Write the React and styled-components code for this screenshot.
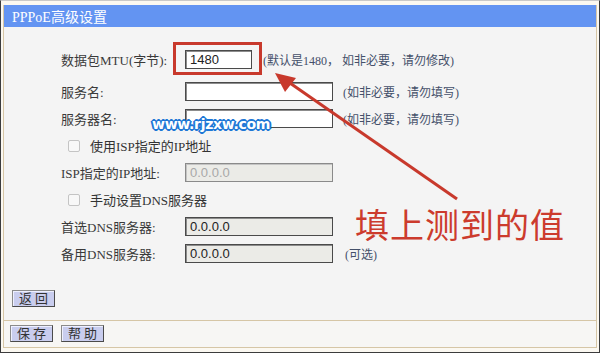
import React from 'react';
import styled, { createGlobalStyle } from 'styled-components';

const GlobalStyle = createGlobalStyle`
  html, body {
    margin: 0;
    padding: 0;
    background: #ffffff;
  }
  * {
    box-sizing: border-box;
  }
`;

const FONT = `"Liberation Serif", "Noto Sans CJK SC", serif`;

const Frame = styled.div`
  position: relative;
  width: 600px;
  height: 353px;
  padding: 4px 2px 4px 2px;
  background: #fbf8f1;
  border: 1px solid #3c3c3c;
  border-top-color: #c9c9c9;
  font-family: ${FONT};
  color: #333;
  overflow: hidden;
`;

const Window = styled.div`
  display: flex;
  flex-direction: column;
  height: 100%;
  border: 1px solid #d6c6a6;
  border-top: none;
`;

const TitleBar = styled.div`
  height: 22px;
  display: flex;
  align-items: center;
  padding-left: 8px;
  background: #6394f2;
  color: #fff;
  font-size: 14px;
`;

const Panel = styled.div`
  height: 294px;
  background: #f4f4f4;
  border-bottom: 1px solid #d6c6a6;
`;

const Form = styled.div`
  display: flex;
  flex-direction: column;
  padding: 14px 0 0 57px;
`;

const Row = styled.div`
  display: flex;
  align-items: center;
  height: ${(p) => (p.$tall ? 37 : 27)}px;
  font-size: 13px;
`;

const Label = styled.span`
  width: 124px;
  flex: none;
  color: #3a3a3a;
`;

const Field = styled.span`
  position: relative;
  display: inline-flex;
`;

const Input = styled.input`
  width: ${(p) => p.$w}px;
  height: ${(p) => p.$h || 19}px;
  padding: 0 4px;
  font-family: "Liberation Sans", "DejaVu Sans", sans-serif;
  font-size: 13px;
  color: ${(p) => (p.$muted ? '#a8a8a8' : '#222')};
  background: ${(p) => (p.$gray ? '#ebebe7' : '#ffffff')};
  border: 1px solid ${(p) => (p.$muted ? '#8a8a8a' : '#4a4a4a')};
  box-shadow: inset 1px 1px 0 ${(p) => (p.$muted ? '#c4c4c4' : '#8c8c8c')};
  outline: none;
`;

const Highlight = styled.span`
  position: absolute;
  top: -8px;
  right: -10px;
  bottom: -6px;
  left: -12px;
  border: 3px solid #c8392c;
  pointer-events: none;
`;

const Hint = styled.span`
  margin-left: ${(p) => p.$gap || 10}px;
  font-size: 12px;
  color: #44506a;
  white-space: nowrap;
`;

const CheckRow = styled(Row)`
  padding-left: 7px;
`;

const Box = styled.span`
  width: 12px;
  height: 12px;
  margin-right: 10px;
  border: 1px solid #c4c4c4;
  border-radius: 2px;
  background: #f8f8f8;
`;

const BackBar = styled.div`
  padding: 22px 0 0 8px;
`;

const Button = styled.button`
  width: 43px;
  height: 17px;
  padding: 0;
  font-family: ${FONT};
  font-size: 13px;
  line-height: 15px;
  letter-spacing: 3px;
  text-indent: 3px;
  color: #333;
  background: #c9cdee;
  border: 1px solid #4a4a4a;
  border-top-color: #8a8a8a;
  border-left-color: #8a8a8a;
  box-shadow: inset 1px 1px 0 #eef0ff;
`;

const Footer = styled.div`
  display: flex;
  gap: 8px;
  padding: 4px 0 0 6px;
  flex: 1;
  background: #f7f6f4;
`;

const Watermark = styled.div`
  position: absolute;
  left: 151px;
  top: 115px;
  font-family: "DejaVu Sans", sans-serif;
  font-weight: bold;
  font-size: 14px;
  letter-spacing: -0.3px;
  color: #ffffff;
  text-shadow:
    1px 0 0 #1f78d6, -1px 0 0 #1f78d6, 0 1px 0 #1f78d6, 0 -1px 0 #1f78d6,
    1px 1px 0 #1f78d6, -1px -1px 0 #1f78d6, 1px -1px 0 #1f78d6, -1px 1px 0 #1f78d6,
    2px 0 0 #1f78d6, -2px 0 0 #1f78d6, 0 2px 0 #1f78d6, 0 -2px 0 #1f78d6;
`;

const Arrow = styled.svg`
  position: absolute;
  left: 0;
  top: 0;
  pointer-events: none;
`;

const Callout = styled.div`
  position: absolute;
  left: 354px;
  top: 206px;
  font-family: "Noto Sans CJK SC", sans-serif;
  font-size: 34px;
  line-height: 34px;
  color: #cc3b2d;
  letter-spacing: 1px;
`;

const App = () => {
  return (
    <>
      <GlobalStyle />
      <Frame>
        <Window>
          <TitleBar>PPPoE高级设置</TitleBar>
          <Panel>
            <Form>
              <Row $tall>
                <Label>数据包MTU(字节):</Label>
                <Field>
                  <Input $w={67} defaultValue="1480" />
                  <Highlight />
                </Field>
                <Hint $gap={11}>(默认是1480， 如非必要，请勿修改)</Hint>
              </Row>
              <Row>
                <Label>服务名:</Label>
                <Input $w={148} />
                <Hint>(如非必要，请勿填写)</Hint>
              </Row>
              <Row>
                <Label>服务器名:</Label>
                <Input $w={148} />
                <Hint>(如非必要，请勿填写)</Hint>
              </Row>
              <CheckRow>
                <Box />
                <span>使用ISP指定的IP地址</span>
              </CheckRow>
              <Row>
                <Label>ISP指定的IP地址:</Label>
                <Input $w={148} $gray $muted defaultValue="0.0.0.0" />
              </Row>
              <CheckRow>
                <Box />
                <span>手动设置DNS服务器</span>
              </CheckRow>
              <Row>
                <Label>首选DNS服务器:</Label>
                <Input $w={148} $gray defaultValue="0.0.0.0" />
              </Row>
              <Row>
                <Label>备用DNS服务器:</Label>
                <Input $w={148} $gray defaultValue="0.0.0.0" />
                <Hint $gap={12}>(可选)</Hint>
              </Row>
            </Form>
            <BackBar>
              <Button>返回</Button>
            </BackBar>
          </Panel>
          <Footer>
            <Button>保存</Button>
            <Button>帮助</Button>
          </Footer>
        </Window>

        <Watermark>www.rjzxw.com</Watermark>
        <Arrow width="600" height="353" viewBox="0 0 600 353">
          <line x1="456" y1="198" x2="286" y2="80" stroke="#c8392c" strokeWidth="3" />
          <polygon points="274,72 295,77 284,91" fill="#c8392c" />
        </Arrow>
        <Callout>填上测到的值</Callout>
      </Frame>
    </>
  );
};

export default App;
